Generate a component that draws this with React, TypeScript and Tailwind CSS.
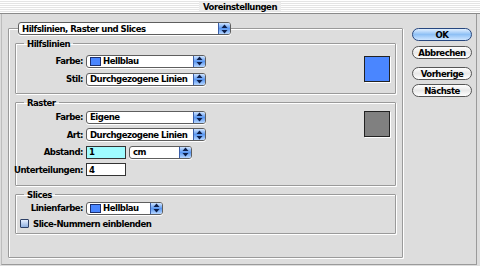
import React from "react";

const F = "font-['DejaVu_Sans_Condensed','Liberation_Sans',sans-serif] font-bold tracking-[-0.5px] whitespace-nowrap";
const T = "text-[9.5px] leading-none";

function Arrows() {
  return (
    <svg width="7" height="10" viewBox="0 0 7 10">
      <path d="M3.5 0.5 L6.5 4 L0.5 4 Z" fill="#0c1e4a" />
      <path d="M3.5 9.5 L6.5 6 L0.5 6 Z" fill="#0c1e4a" />
    </svg>
  );
}

function Popup({ w, children, swatch }: { w: string; children: React.ReactNode; swatch?: boolean }) {
  return (
    <div className={`flex h-[13px] ${w} items-stretch rounded-[3px] border border-[#5e5e5e] bg-white shadow-[0_1px_0_#fff]`}>
      <div className={`flex flex-1 items-center gap-[2px] pl-[3px] ${T} text-black`}>
        {swatch && <span className="h-[9px] w-[11px] border border-[#1b2f70] bg-[#4a86ff]" />}
        <span>{children}</span>
      </div>
      <div className="flex w-[12px] items-center justify-center rounded-r-[2px] border-l border-[#3a5ea8] bg-gradient-to-b from-[#cfe4ff] via-[#5a97f0] to-[#b6d6ff]">
        <Arrows />
      </div>
    </div>
  );
}

function Button({ children, primary }: { children: React.ReactNode; primary?: boolean }) {
  return (
    <div
      className={`flex h-[13px] w-[60px] items-center justify-center rounded-full border ${T} text-black ${
        primary
          ? "border-[#27477f] bg-gradient-to-b from-[#e2f0ff] via-[#8ec0f5] to-[#cfe6ff]"
          : "border-[#555] bg-gradient-to-b from-[#ffffff] via-[#e8e8e8] to-[#ffffff]"
      }`}
    >
      {children}
    </div>
  );
}

function Row({ label, children }: { label: string; children: React.ReactNode }) {
  return (
    <div className="flex h-[13px] items-center gap-[3px]">
      <div className={`flex w-[67px] justify-end ${T} text-black`}>{label}</div>
      {children}
    </div>
  );
}

const groupCls =
  "rounded-[1px] border border-[#9a9a9a] shadow-[1px_1px_0_#fff,inset_1px_1px_0_#fff] mx-[6px] m-0 p-0 min-w-0";

export default function App() {
  return (
    <div className={`${F} flex h-[266px] w-[480px] flex-col overflow-hidden bg-[#dddddd] text-black`}>
      <div className={`flex h-[13px] items-center justify-center bg-[repeating-linear-gradient(to_bottom,#ffffff_0px,#ffffff_1px,#e4e4e4_1px,#e4e4e4_2px)] ${T}`}>
        <span className="bg-[#ececec] px-[4px]">Voreinstellungen</span>
      </div>
      <div className="h-px bg-[#8a8a8a]" />
      <div className="ml-[1px] mr-[3px] mb-[1px] flex flex-1 border-r border-b border-l border-r-[#9a9a9a] border-b-[#9a9a9a] border-l-[#bdbdbd]">
        <div className="pl-[6px] pt-[8px]">
          <fieldset className="m-0 h-[236px] w-[395px] min-w-0 rounded-[1px] border border-[#9a9a9a] p-0 shadow-[1px_1px_0_#fff,inset_1px_1px_0_#fff]">
            <legend className="ml-[9px] p-0">
              <Popup w="w-[213px]">Hilfslinien, Raster und Slices</Popup>
            </legend>
            <div className="flex flex-col gap-[4px] pt-[4px]">
              <fieldset className={`${groupCls} h-[55px]`}>
                <legend className={`ml-[8px] px-[3px] ${T} leading-[12px]`}>Hilfslinien</legend>
                <div className="flex justify-between pr-[5px] pt-[6px]">
                  <div className="flex flex-col gap-[5px]">
                    <Row label="Farbe:">
                      <Popup w="w-[120px]" swatch>Hellblau</Popup>
                    </Row>
                    <Row label="Stil:">
                      <Popup w="w-[120px]">Durchgezogene Linien</Popup>
                    </Row>
                  </div>
                  <div className="mt-[1px] h-[26px] w-[26px] border border-[#222] bg-[#4a86ff] shadow-[1px_1px_0_#fff]" />
                </div>
              </fieldset>
              <fieldset className={`${groupCls} h-[88px]`}>
                <legend className={`ml-[8px] px-[3px] ${T} leading-[12px]`}>Raster</legend>
                <div className="flex justify-between pr-[5px] pt-[3px]">
                  <div className="flex flex-col gap-[4.5px]">
                    <Row label="Farbe:">
                      <Popup w="w-[120px]">Eigene</Popup>
                    </Row>
                    <Row label="Art:">
                      <Popup w="w-[120px]">Durchgezogene Linien</Popup>
                    </Row>
                    <Row label="Abstand:">
                      <div className={`flex h-[13px] w-[40px] items-center border border-[#333] bg-[#9ffcff] pl-[2px] ${T}`}>1</div>
                      <Popup w="w-[63px]">cm</Popup>
                    </Row>
                    <Row label="Unterteilungen:">
                      <div className={`flex h-[13px] w-[40px] items-center border border-[#333] bg-white pl-[2px] ${T}`}>4</div>
                    </Row>
                  </div>
                  <div className="h-[26px] w-[26px] border border-[#222] bg-[#808080] shadow-[1px_1px_0_#fff]" />
                </div>
              </fieldset>
              <fieldset className={`${groupCls} h-[44px]`}>
                <legend className={`ml-[8px] px-[3px] ${T} leading-[12px]`}>Slices</legend>
                <div className="flex flex-col gap-[4px] pt-[2px]">
                  <Row label="Linienfarbe:">
                    <Popup w="w-[77px]" swatch>Hellblau</Popup>
                  </Row>
                  <div className="flex items-center gap-[4px] pl-[4px]">
                    <span className="h-[9px] w-[9px] rounded-[1px] border border-[#2c3f66] bg-gradient-to-b from-[#e6efff] to-[#8fb0e0]" />
                    <span className={T}>Slice-Nummern einblenden</span>
                  </div>
                </div>
              </fieldset>
            </div>
          </fieldset>
        </div>
        <div className="flex flex-col pl-[9px] pt-[14px]">
          <Button primary>OK</Button>
          <div className="h-[5px]" />
          <Button>Abbrechen</Button>
          <div className="h-[8px]" />
          <Button>Vorherige</Button>
          <div className="h-[4px]" />
          <Button>Nächste</Button>
        </div>
      </div>
    </div>
  );
}
